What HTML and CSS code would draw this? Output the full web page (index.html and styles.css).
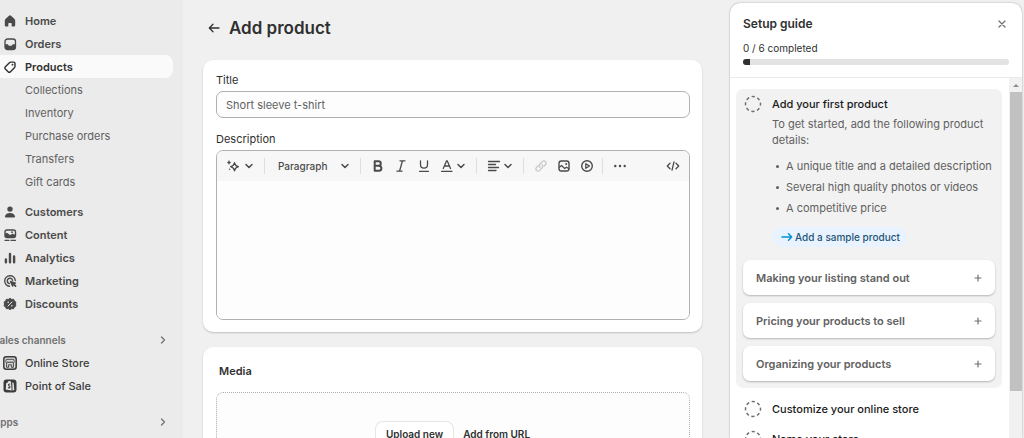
FILE: index.html
```html
<!DOCTYPE html>
<html lang="en">
<head>
<meta charset="utf-8">
<title>Add product</title>
<link rel="stylesheet" href="styles.css">
</head>
<body>
<svg class="sprite" aria-hidden="true">
  <symbol id="chevron-down" viewBox="0 0 14 14"><path d="M4 5.500l3 3 3-3" fill="none" stroke="currentColor" stroke-width="1.500" stroke-linecap="round" stroke-linejoin="round"/></symbol>
  <symbol id="chevron-right" viewBox="0 0 14 14"><path d="M5.500 4l3 3-3 3" fill="none" stroke="currentColor" stroke-width="1.300" stroke-linecap="round" stroke-linejoin="round"/></symbol>
  <symbol id="plus" viewBox="0 0 14 14"><path d="M7 4v6M4 7h6" fill="none" stroke="currentColor" stroke-width="1.200" stroke-linecap="round"/></symbol>
  <symbol id="ring" viewBox="0 0 18 18"><circle cx="9" cy="9" r="7.500" fill="none" stroke="currentColor" stroke-width="1.500" stroke-dasharray="3.200 2.690" stroke-dashoffset="1.600" stroke-linecap="butt"/></symbol>
</svg>
<div class="app">
  <nav class="sidebar" aria-label="Main">
    <ul class="nav">
      <li><a class="nav-link" href="#"><svg class="icon" viewBox="0 0 14 14"><path d="M6 1.700a1.500 1.500 0 0 1 2 0l3.300 3.100c.6.600.9 1.200.9 2v4.100c0 1-.6 1.600-1.600 1.600H8.700V10c0-.6-.4-1-1-1H6.300c-.6 0-1 .4-1 1v2.500H3.400c-1 0-1.600-.6-1.600-1.600V6.800c0-.8.3-1.400.9-2z" fill="currentColor"/></svg>Home</a></li>
      <li><a class="nav-link" href="#"><svg class="icon" viewBox="0 0 14 14"><rect x="2" y="2" width="10.500" height="10.500" rx="2.500" fill="none" stroke="currentColor" stroke-width="1.300"/><path d="M2 7.200h2.700c.5 0 .6 1.500 1.400 1.500h2.300c.8 0 .9-1.500 1.400-1.500h2.700v3c0 1.500-1 2.300-2.300 2.300H4.300C3 12.500 2 11.700 2 10.200z" fill="currentColor"/></svg>Orders</a></li>
      <li><a class="nav-link current" href="#" aria-current="page"><svg class="icon" viewBox="0 0 14 14"><path d="M7.700 2.100h2.900c.8 0 1.400.6 1.400 1.400v2.800c0 .6-.2 1-.6 1.400l-3.900 4c-.7.700-1.700.7-2.400 0L2.400 9.100c-.7-.7-.7-1.700 0-2.400l4-4c.4-.4.800-.6 1.300-.6z" fill="none" stroke="currentColor" stroke-width="1.400"/><circle cx="9.500" cy="4.700" r=".9" fill="currentColor"/></svg>Products</a>
        <ul class="subnav">
          <li><a class="nav-link sub" href="#">Collections</a></li>
          <li><a class="nav-link sub" href="#">Inventory</a></li>
          <li><a class="nav-link sub" href="#">Purchase orders</a></li>
          <li><a class="nav-link sub" href="#">Transfers</a></li>
          <li><a class="nav-link sub" href="#">Gift cards</a></li>
        </ul>
      </li>
      <li><a class="nav-link" href="#"><svg class="icon" viewBox="0 0 14 14"><circle cx="7" cy="4.100" r="2.700" fill="currentColor"/><path d="M1.900 11.300C2.500 9.200 4.500 8 7 8s4.500 1.200 5.100 3.300c.2.700-.3 1.200-1 1.200H2.900c-.7 0-1.200-.5-1-1.200z" fill="currentColor"/></svg>Customers</a></li>
      <li><a class="nav-link" href="#"><svg class="icon" viewBox="0 0 14 14"><rect x="2" y="2" width="10.500" height="7.500" rx="2" fill="none" stroke="currentColor" stroke-width="1.400"/><path d="M2 5.800l2-1 3 2.300 2.500-1.300 3 1v.8c0 1.300-.8 2-1.800 2H4c-1.200 0-2-.9-2-2z" fill="currentColor"/><circle cx="9" cy="4.200" r=".9" fill="currentColor"/><path d="M2 12.300h4M8 12.300h4.500" stroke="currentColor" stroke-width="1.300" stroke-linecap="round"/></svg>Content</a></li>
      <li><a class="nav-link" href="#"><svg class="icon" viewBox="0 0 14 14"><path d="M2.900 8.500v2.800M7 3v8.300M11.100 5.500v5.800" stroke="currentColor" stroke-width="2.400" stroke-linecap="round"/></svg>Analytics</a></li>
      <li><a class="nav-link" href="#"><svg class="icon" viewBox="0 0 14 14"><path d="M12.300 6.500A5.300 5.300 0 1 0 6.500 12.300M9.600 6.300A2.700 2.700 0 1 0 6.300 9.600" fill="none" stroke="currentColor" stroke-width="1.400" stroke-linecap="round"/><path d="M6.800 7.500c-.2-.5.200-.9.700-.7l5.300 1.800c.5.200.6.800.1 1l-1 .6 1.300 1.300c.8.800-.5 2-1.300 1.300l-1.300-1.300-.6 1c-.3.500-.9.400-1-.1z" fill="currentColor"/></svg>Marketing</a></li>
      <li><a class="nav-link" href="#"><svg class="icon" viewBox="0 0 14 14"><path d="M7 1.300l1.600 1.100 2-.1.800 1.800 1.500 1-.4 1.900.4 1.900-1.500 1-.8 1.800-2-.1L7 12.700l-1.600-1.100-2 .1-.8-1.800-1.500-1 .4-1.900-.4-1.900 1.500-1 .8-1.800 2 .1z" fill="currentColor" stroke="currentColor" stroke-linejoin="round"/><path d="M5 9l4-4" stroke="#ebebeb" stroke-linecap="round"/><circle cx="5.200" cy="5.200" r=".8" fill="#ebebeb"/><circle cx="8.800" cy="8.800" r=".8" fill="#ebebeb"/></svg>Discounts</a></li>
    </ul>
    <button class="section-title" type="button">Sales channels<svg class="icon"><use href="#chevron-right"/></svg></button>
    <ul class="nav">
      <li><a class="nav-link medium" href="#"><svg class="icon" viewBox="0 0 14 14"><rect x=".8" y=".8" width="12.400" height="12.400" rx="2.500" fill="#d9d9d9" stroke="currentColor" stroke-width="1.500"/><path d="M3.300 3.300h7.400l.6 2.300c0 1.500-2.100 1.500-2.200 0 0 1.500-2.100 1.500-2.100 0 0 1.500-2.100 1.500-2.100 0-.1 1.500-2.200 1.500-2.200 0zM3.600 7v4.300h2V8.800h2.800v2.500h2V7" fill="none" stroke="currentColor" stroke-width=".9"/></svg>Online Store</a></li>
      <li><a class="nav-link medium" href="#"><svg class="icon" viewBox="0 0 14 14"><rect x=".5" y=".5" width="13" height="13" rx="3" fill="currentColor"/><path d="M3.200 4.200l1.300-.5C5 1.700 7.500 1.500 8 3l.6 8.500-5.800-1z" fill="#ebebeb"/><path d="M9.300 3.300l1.300.8.700 6.800-1.700.6z" fill="#ebebeb"/><path d="M7.300 5.200C5.800 4.700 5 5.700 5.700 6.500c.5.600 1.300.8 1.300 1.600 0 .9-1 1.100-2 .4" fill="none" stroke="currentColor" stroke-width="1.100"/></svg>Point of Sale</a></li>
    </ul>
    <button class="section-title" type="button">Apps<svg class="icon"><use href="#chevron-right"/></svg></button>
  </nav>

  <main class="main">
    <header class="page-head">
      <a class="back" href="#" aria-label="Back"><svg class="icon" viewBox="0 0 14 14"><path d="M12 7H2.500M6 3.300L2.300 7 6 10.700" fill="none" stroke="currentColor" stroke-width="1.300" stroke-linecap="round" stroke-linejoin="round"/></svg></a>
      <h1>Add product</h1>
    </header>
    <section class="card">
      <label class="field-label" for="title">Title</label>
      <input class="text-input" id="title" type="text" placeholder="Short sleeve t-shirt">
      <label class="field-label" for="description">Description</label>
      <div class="editor">
        <div class="toolbar" role="toolbar" aria-label="Formatting">
          <div class="group ai">
            <button class="tool" type="button" aria-label="Generate text"><svg class="icon" viewBox="0 0 14 14"><path d="M8.500 3.800c.5 2.300 1.300 3.100 3.800 3.900-2.500.8-3.300 1.600-3.800 4-.5-2.400-1.300-3.200-3.800-4 2.500-.8 3.300-1.600 3.800-3.900z" fill="none" stroke="currentColor" stroke-width="1.400" stroke-linejoin="round"/><path d="M3 1.500c.3 1.300.6 1.600 2 2-1.400.4-1.700.7-2 2-.3-1.300-.6-1.600-2-2 1.400-.4 1.700-.7 2-2z" fill="currentColor" stroke="currentColor" stroke-width=".5"/><circle cx="3.600" cy="10.300" r=".7" fill="currentColor"/></svg></button>
            <button class="tool" type="button" aria-label="More generation options"><svg class="icon"><use href="#chevron-down"/></svg></button>
          </div>
          <div class="group style-group">
            <div class="style-picker"><select aria-label="Text style"><option>Paragraph</option></select><svg class="icon"><use href="#chevron-down"/></svg></div>
          </div>
          <div class="group">
            <button class="tool" type="button" aria-label="Bold"><svg class="icon" viewBox="0 0 14 14"><path d="M3.700 2.300h3.800c3 0 3 4.400 0 4.400H3.700zM3.700 6.700h4.200c3.300 0 3.300 5 0 5H3.700z" fill="none" stroke="currentColor" stroke-width="2" stroke-linejoin="round"/></svg></button>
            <button class="tool" type="button" aria-label="Italic"><svg class="icon" viewBox="0 0 14 14"><path d="M6 1.800h5M3 12.200h5M8.500 1.800l-3 10.400" fill="none" stroke="currentColor" stroke-width="1.300" stroke-linecap="round"/></svg></button>
            <button class="tool" type="button" aria-label="Underline"><svg class="icon" viewBox="0 0 14 14"><path d="M3.500 1.800v4c0 4.500 7 4.500 7 0v-4M2.500 12.300h9" fill="none" stroke="currentColor" stroke-width="1.300" stroke-linecap="round"/></svg></button>
            <div class="pair">
              <button class="tool" type="button" aria-label="Text color"><svg class="icon" viewBox="0 0 14 14"><path d="M3.300 9.500L6.600 1.800h.6l3.300 7.700M4.500 7h4.800M1.500 12.300h10.500" fill="none" stroke="currentColor" stroke-width="1.300" stroke-linecap="round" stroke-linejoin="round"/></svg></button>
              <button class="tool" type="button" aria-label="Color options"><svg class="icon"><use href="#chevron-down"/></svg></button>
            </div>
          </div>
          <div class="group">
            <div class="pair">
              <button class="tool" type="button" aria-label="Alignment"><svg class="icon" viewBox="0 0 14 14"><path d="M1.500 2.500h11M1.500 5.500h7M1.500 8.500h10M1.500 11.500h7.500" stroke="currentColor" stroke-width="1.300" stroke-linecap="round"/></svg></button>
              <button class="tool" type="button" aria-label="Alignment options"><svg class="icon"><use href="#chevron-down"/></svg></button>
            </div>
          </div>
          <div class="group">
            <button class="tool" type="button" aria-label="Insert link" disabled><svg class="icon" viewBox="0 0 14 14"><path d="M6 8.300c-1-1-.9-2.400 0-3.300l2.400-2.400c2-2 5 1 3.100 3L10.200 7M8 5.700c1 1 .9 2.400 0 3.300l-2.400 2.400c-2 2-5-1-3.100-3L3.800 7" fill="none" stroke="currentColor" stroke-width="1.300" stroke-linecap="round"/></svg></button>
            <button class="tool" type="button" aria-label="Insert image"><svg class="icon" viewBox="0 0 14 14"><rect x="2" y="2" width="10" height="10" rx="2.300" fill="none" stroke="currentColor" stroke-width="1.400"/><path d="M2 8.500l2.500-2 3.200 3 1.800-1.300 2.500 1.500" fill="none" stroke="currentColor" stroke-width="1.300"/><circle cx="9.200" cy="5" r="1" fill="currentColor"/></svg></button>
            <button class="tool" type="button" aria-label="Insert video"><svg class="icon" viewBox="0 0 14 14"><circle cx="7" cy="7" r="5.300" fill="none" stroke="currentColor" stroke-width="1.400"/><path d="M5.800 4.700L9.500 7 5.800 9.300z" fill="none" stroke="currentColor" stroke-width="1.300" stroke-linejoin="round"/></svg></button>
          </div>
          <div class="group">
            <button class="tool" type="button" aria-label="More"><svg class="icon" viewBox="0 0 14 14"><g fill="currentColor"><circle cx="2.300" cy="7" r="1.200"/><circle cx="7" cy="7" r="1.200"/><circle cx="11.700" cy="7" r="1.200"/></g></svg></button>
          </div>
          <button class="tool code" type="button" aria-label="Show HTML"><svg class="icon" viewBox="0 0 14 14"><path d="M4 4.200L1.300 7 4 9.800M10 4.200L12.700 7 10 9.800M8 2.800l-2 8.400" fill="none" stroke="currentColor" stroke-width="1.300" stroke-linecap="round" stroke-linejoin="round"/></svg></button>
        </div>
        <textarea class="editor-area" id="description"></textarea>
      </div>
    </section>
    <section class="card media">
      <h2>Media</h2>
      <div class="dropzone">
        <button class="upload" type="button">Upload new</button>
        <button class="from-url" type="button">Add from URL</button>
      </div>
    </section>
  </main>

  <aside class="guide" aria-label="Setup guide">
    <header class="guide-head">
      <div class="guide-title"><h2>Setup guide</h2><button class="close" type="button" aria-label="Close"><svg class="icon" viewBox="0 0 14 14"><path d="M4 4l6 6M10 4l-6 6" stroke="currentColor" stroke-width="1.300" stroke-linecap="round"/></svg></button></div>
      <p class="completed">0 / 6 completed</p>
      <div class="progress"><div class="progress-fill"></div></div>
    </header>
    <div class="guide-body">
      <div class="steps">
        <section class="step-open">
          <div class="step">
            <svg class="ring"><use href="#ring"/></svg>
            <div class="step-text">
              <h3>Add your first product</h3>
              <p>To get started, add the following product details:</p>
              <ul>
                <li>A unique title and a detailed description</li>
                <li>Several high quality photos or videos</li>
                <li>A competitive price</li>
              </ul>
              <button class="sample" type="button"><svg class="icon" viewBox="0 0 14 14"><path d="M2 7h9.700M8.500 3.800L11.700 7l-3.200 3.200" fill="none" stroke="currentColor" stroke-width="1.500" stroke-linecap="round" stroke-linejoin="round"/></svg>Add a sample product</button>
            </div>
          </div>
          <button class="topic" type="button">Making your listing stand out<svg class="icon"><use href="#plus"/></svg></button>
          <button class="topic" type="button">Pricing your products to sell<svg class="icon"><use href="#plus"/></svg></button>
          <button class="topic" type="button">Organizing your products<svg class="icon"><use href="#plus"/></svg></button>
        </section>
        <div class="step closed"><svg class="ring"><use href="#ring"/></svg><h3>Customize your online store</h3></div>
        <div class="step closed"><svg class="ring"><use href="#ring"/></svg><h3>Name your store</h3></div>
      </div>
      <div class="scrollbar" aria-hidden="true"><div class="scroll-up"></div><div class="scroll-thumb"></div></div>
    </div>
  </aside>
</div>
</body>
</html>
```
FILE: styles.css
```css
* { box-sizing: border-box; }
body {
  margin: 0;
  font-family: Inter, "Liberation Sans", sans-serif;
  font-size: 11px;
  line-height: 16px;
  color: #303030;
  background: #f0f0f0;
}
h1, h2, h3, p, ul { margin: 0; padding: 0; }
button, input, select, textarea { font: inherit; color: inherit; }
button { border: 0; padding: 0; background: none; }
a { color: inherit; text-decoration: none; }
.sprite { display: none; }
.icon { width: 14px; height: 14px; flex: none; display: block; }
.app { display: flex; height: 100vh; overflow: hidden; }

.sidebar { width: 183px; flex: none; padding: 9px 10px 0 0; background: #ebebeb; overflow: hidden; color: #4a4a4a; }
.nav, .subnav { list-style: none; }
.nav-link { display: flex; align-items: center; gap: 8px; height: 23px; padding-left: 3px; border-radius: 0 8px 8px 0; font-weight: 600; }
.nav-link.current { background: #fafafa; color: #303030; }
.nav-link.sub { padding-left: 25px; font-weight: 400; color: #616161; }
.nav-link.medium { font-weight: 500; color: #3c3c3c; }
.subnav { margin-bottom: 7px; }
.section-title { display: flex; align-items: center; justify-content: space-between; width: calc(100% + 7px); height: 23px; margin: 13px 0 0 -7px; padding-right: 3px; font-size: 10px; font-weight: 600; color: #707070; }

.main { flex: 1; min-width: 0; padding: 17px 28px 0 20px; display: flex; flex-direction: column; }
.page-head { display: flex; align-items: center; gap: 8px; padding-left: 4px; margin-bottom: 21px; }
.page-head h1 { font-size: 17px; line-height: 22px; font-weight: 600; }
.card { flex: none; padding: 12px 12px 12px 13px; border-radius: 10px; background: #fff; box-shadow: 0 1px 2px rgba(0, 0, 0, .2); }
.field-label { display: block; margin-bottom: 3px; }
.text-input { display: block; width: 100%; height: 27px; margin-bottom: 13px; padding: 0 9px; border: 1px solid #b0b0b0; border-radius: 7px; background: #fdfdfd; }
.text-input::placeholder { color: #616161; opacity: 1; }
.editor { border: 1px solid #b0b0b0; border-radius: 7px; overflow: hidden; }
.toolbar { display: flex; align-items: center; height: 30px; padding-right: 9px; background: #f7f7f7; color: #4a4a4a; }
.tool { flex: none; }
.tool:disabled { color: #c8c8c8; }
.group { display: flex; align-items: center; gap: 9px; height: 16px; padding: 0 8px 0 10px; border-left: 1px solid #dedede; }
.group.ai { border: 0; padding-left: 9px; gap: 2px; }
.style-group { padding-left: 13px; }
.pair { display: flex; }
.code { margin-left: auto; }
.style-picker { display: grid; width: 74px; align-items: center; }
.style-picker > * { grid-area: 1 / 1; }
.style-picker select { appearance: none; width: 100%; padding: 0; border: 0; background: none; font-size: 10px; font-weight: 500; }
.style-picker .icon { justify-self: end; pointer-events: none; }
.editor-area { display: block; width: 100%; height: 138px; padding: 8px; border: 0; resize: none; background: #fdfdfd; }
.media { margin-top: 15px; padding-top: 16px; }
.media h2 { margin: 0 0 13px 3px; font-size: 11px; font-weight: 600; }
.dropzone { display: flex; justify-content: center; gap: 10px; height: 100px; padding-top: 29px; align-items: flex-start; border: 1px dotted #b0b0b0; border-radius: 7px; background: #fdfdfd; font-size: 10px; font-weight: 600; }
.upload { height: 23px; padding: 0 10px; border-radius: 7px; background: #fff; box-shadow: 0 0 0 1px #e6e6e6; }
.from-url { height: 23px; }

.guide { display: flex; flex-direction: column; width: 292px; flex: none; margin: 3px 2px 0 0; border-radius: 10px 10px 0 0; background: #fff; box-shadow: 0 0 2px rgba(0, 0, 0, .35); overflow: hidden; }
.guide-head { padding: 13px 13px 12px; border-bottom: 1px solid #ebebeb; }
.guide-title { display: flex; align-items: center; justify-content: space-between; margin-bottom: 8px; }
.guide-title h2 { font-size: 12px; line-height: 16px; font-weight: 600; }
.close { color: #707070; }
.completed { font-size: 10px; }
.progress { height: 6px; margin-top: 3px; border-radius: 3px; background: #e3e3e3; overflow: hidden; }
.progress-fill { width: 7px; height: 100%; background: #303030; }
.guide-body { display: flex; flex: 1; min-height: 0; }
.steps { flex: 1; padding: 11px 7px 0 6px; }
.step-open { padding: 6px 7px 7px; border-radius: 7px; background: #f2f2f2; }
.step { display: flex; gap: 10px; padding-left: 1px; }
.ring { width: 18px; height: 18px; flex: none; color: #707070; }
.step h3 { font-size: 11px; line-height: 18px; font-weight: 500; color: #1a1a1a; }
.step-text { color: #616161; }
.step-text p { margin-top: 3px; }
.step-text ul { margin: 8px 0; line-height: 21px; list-style: none; }
.step-text li { display: flex; align-items: center; gap: 7px; padding-left: 4px; }
.step-text li::before { content: ""; width: 3px; height: 3px; border-radius: 50%; background: currentColor; }
.sample { display: flex; align-items: center; gap: 1px; height: 20px; margin-bottom: 5px; padding: 0 7px 0 8px; border-radius: 10px; background: #e8f3ff; color: #1f5375; font-size: 10px; font-weight: 500; }
.sample .icon { color: #0094d5; }
.topic { display: flex; align-items: center; justify-content: space-between; width: 100%; height: 35px; margin-top: 8px; padding: 0 10px 0 13px; border-radius: 7px; background: #fff; box-shadow: 0 1px 2px rgba(0, 0, 0, .25); color: #616161; font-weight: 600; }
.topic .icon { color: #707070; }
.closed { margin: 12px 7px 0; }
.scrollbar { width: 13px; background: #f1f1f1; }
.scroll-up { width: 6px; height: 3px; margin: 6px 4px 5px; background: #8c8c8c; clip-path: polygon(50% 0, 100% 100%, 0 100%); }
.scroll-thumb { height: 299px; margin-left: 1px; background: #c1c1c1; }
```
